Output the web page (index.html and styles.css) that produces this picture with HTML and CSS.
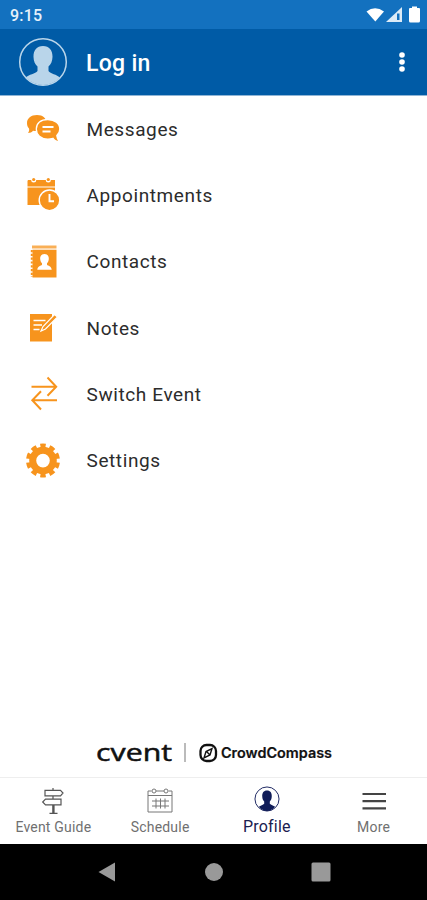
FILE: index.html
```html
<!DOCTYPE html>
<html lang="en">
<head>
<meta charset="utf-8">
<title>Profile</title>
<link rel="stylesheet" href="styles.css">
</head>
<body>
<div class="status">
  <span class="time">9:15</span>
  <svg width="56" height="20" viewBox="0 0 56 20" fill="#fff"><path d="M1.500 5.500Q10-1 19 5.500L10.300 15.500z" transform="translate(0 2)"/><path d="M37 3V18H21z" fill="#dcebf7"/><path d="M32 9.500h2.500V16H32z" fill="#1371bf"/><path d="M45 4h2V2.500h5V4h2q1 0 1 1v12q0 1.500-1.500 1.500h-8Q44 18.500 44 17V5q0-1 1-1z"/></svg>
</div>
<header class="header">
  <svg class="avatar" width="50" height="50" viewBox="0 0 50 50"><clipPath id="c"><circle cx="25" cy="25" r="23"/></clipPath><circle cx="25" cy="25" r="23.300" fill="none" stroke="#b9d5ea" stroke-width="1.500"/><path clip-path="url(#c)" fill="#b9d5ea" d="M25 9c6.500 0 9.700 4.800 9.500 11-.1 4.500-1.700 7.500-4 9.500v4.500c2 3 8 3 12 7v9H7v-9c4-4 10.500-4 12.500-7v-4.500c-2.300-2-3.900-5-4-9.500C15.300 13.800 18.500 9 25 9z"/></svg>
  <h1>Log in</h1>
  <svg width="10" height="24" viewBox="0 0 10 24" fill="#fff"><circle cx="5" cy="5" r="2.800"/><circle cx="5" cy="12" r="2.800"/><circle cx="5" cy="19" r="2.800"/></svg>
</header>
<main>
  <a class="row"><svg class="ic" viewBox="0 0 40 40"><path d="M14 6c6 0 9.500 3.500 9.500 8S19 22 13 22c-1 0-2 0-3-.3C9 23 7 24 5 24c1-1.500 1.500-3 1-4.500C4.500 18 4 16 4 14c0-4.500 4-8 10-8z"/><path stroke="#fff" stroke-width="1.300" d="M24.800 10.500c7 0 12 4 12 9.500 0 2.800-1.200 5-3 6.500 0 2 .8 3.800 2.700 6-3 0-5-.8-6.500-3.200-1.500.5-3 .8-5.200.8-7 0-11.500-4.300-11.500-10.100s4.500-9.500 11.500-9.500z"/><path d="M19.500 18h11M19.500 22.500h8" fill="none" stroke="#fff" stroke-width="1.800"/></svg><span>Messages</span></a>
  <a class="row"><svg class="ic" viewBox="0 0 40 40"><path d="M5 5h3.200a2.500 2.500 0 0 0 5 0h9.600a2.500 2.500 0 0 0 5 0H32v6.500H4.500V6z"/><circle cx="10.700" cy="4.500" r="1.600"/><circle cx="25.300" cy="4.500" r="1.600"/><path d="M4.500 12.500H32V30H4.500z"/><circle cx="26.500" cy="25.300" r="10.300" stroke="#fff" stroke-width="1.400"/><path d="M26.500 19v7.200h4.500" fill="none" stroke="#fff" stroke-width="1.900"/></svg><span>Appointments</span></a>
  <a class="row"><svg class="ic" viewBox="0 0 40 40"><path d="M9 3.500h24.500v3H9z" opacity=".75"/><path d="M9.500 7.700h24v27.800h-24z"/><path d="M8.800 8v27" fill="none" stroke="#f7941d" stroke-width="2" stroke-dasharray="2.200 1.600"/><path fill="#fff" d="M21.500 12c3 0 4.500 2.200 4.300 5-.1 2-.8 3.300-1.800 4.300v1.500c1 1.200 4.300 1 4.700 5H14.300c.4-4 3.700-3.800 4.700-5v-1.500c-1-1-1.700-2.300-1.800-4.300-.2-2.800 1.300-5 4.300-5z"/></svg><span>Contacts</span></a>
  <a class="row"><svg class="ic" viewBox="0 0 40 40"><path d="M7 6h22v27.500H7z"/><path d="M10.500 12.500h12M10.500 17h8.500M10.500 21.500h6" fill="none" stroke="#fff" stroke-width="1.500"/><path d="M18 23l2-4.500L31.500 6.500l3 2.500L22.500 21z" stroke="#fff" stroke-width="1.200"/></svg><span>Notes</span></a>
  <a class="row"><svg class="ic line" viewBox="0 0 40 40"><path d="M8.500 12.700H33M24.500 3.500l8.700 9.200-8.700 9M34 26.300H9.500M18 17.300l-8.700 9 8.700 9.200"/></svg><span>Switch Event</span></a>
  <a class="row"><svg class="ic" viewBox="0 0 40 40"><circle cx="20" cy="19.600" r="10.300" fill="none" stroke="#f7941d" stroke-width="7"/><circle cx="20" cy="19.600" r="14.600" fill="none" stroke="#f7941d" stroke-width="4.800" pathLength="100" stroke-dasharray="5.800 4.200" stroke-dashoffset="-22.100"/></svg><span>Settings</span></a>
</main>
<footer class="brand">
  <svg width="240" height="30" viewBox="0 0 240 30"><text class="cvent" x="2" y="21" textLength="76" lengthAdjust="spacingAndGlyphs">cvent</text><path d="M91 3v19" stroke="#bbb" stroke-width="2"/><rect x="106.500" y="5" width="15.500" height="16" rx="6" fill="none" stroke="#111" stroke-width="2.300"/><path d="M118 8.500l-2 6.500-6 3 2-6.500zM112.500 11.500l3 3" fill="none" stroke="#111" stroke-width="1.400"/><text class="crowd" x="127" y="18" textLength="111" lengthAdjust="spacingAndGlyphs">CrowdCompass</text></svg>
</footer>
<nav class="tabs">
  <a><svg width="28" height="28" viewBox="0 0 28 28" fill="none" stroke="#555" stroke-width="1.200"><path d="M14 1v2M14 9v3M13.800 18v8M15 18v8M10.500 26.300h8M6 3.300h15.500l2.500 2.700-2.500 2.800H6zM22 12.200H6.500L3.700 15l2.800 2.800H22z"/></svg><span>Event Guide</span></a>
  <a><svg width="28" height="28" viewBox="0 0 28 28" fill="none" stroke="#777" stroke-width="1"><path d="M5.500 4H2v21h24V4h-3.500M10 4h8M2 8.500h24M6 14h17M6 19h17M10 11.500v10M14.500 11.500v10M19 11.500v10"/><circle cx="8" cy="4" r="2"/><circle cx="20" cy="4" r="2"/></svg><span>Schedule</span></a>
  <a class="active"><svg width="28" height="28" viewBox="0 0 50 50"><circle cx="25" cy="25" r="21.500" fill="none" stroke="#15205c" stroke-width="1.700"/><path fill="#101c58" d="M25 10c6 0 8.700 4.300 8.500 10-.1 4.500-1.500 7.500-3.500 9.500v4c2 2.500 6.500 3 9.500 5.500-3.500 4.500-9 7.500-14.500 7.500S14 43.500 10.500 39c3-2.500 7.500-3 9.500-5.500v-4c-2-2-3.400-5-3.500-9.500-.2-5.700 2.500-10 8.500-10z"/></svg><span>Profile</span></a>
  <a><svg width="28" height="28" viewBox="0 0 28 28" stroke="#444" stroke-width="2.200"><path d="M2.500 7h23.500M2.500 14.200h23.500M2.500 21.300h23.500"/></svg><span>More</span></a>
</nav>
<div class="sys">
  <svg width="20" height="22" viewBox="0 0 20 22"><path d="M18 1.500v19L1.500 11z"/></svg>
  <svg width="20" height="22" viewBox="0 0 20 22"><circle cx="10" cy="11" r="9"/></svg>
  <svg width="20" height="22" viewBox="0 0 20 22"><rect x=".5" y="1.500" width="19" height="19" rx="1.500"/></svg>
</div>
</body>
</html>
```
FILE: styles.css
```css
* { box-sizing: border-box; }
body {
  margin: 0;
  height: 900px;
  display: flex;
  flex-direction: column;
  background: #fff;
  font-family: Roboto, sans-serif;
  overflow: hidden;
}
svg { display: block; flex: none; overflow: visible; }
.status {
  height: 29px;
  padding: 0 6px 0 10px;
  display: flex;
  align-items: center;
  justify-content: space-between;
  background: #1371bf;
  color: #e6f1fa;
}
.status svg { margin-top: -2px; }
.time { font-size: 16px; font-weight: 500; letter-spacing: .2px; padding-top: 2px; }
.header {
  height: 66px;
  padding: 0 20px 0 18px;
  display: flex;
  align-items: center;
  background: #005ba6;
  color: #fff;
}
.header h1 { flex: 1; margin: 0 0 0 18px; padding-top: 3px; font-size: 23px; font-weight: 500; letter-spacing: .3px; }
main { flex: 1; border-top: 1px solid #8fb5d6; }
.row { height: 66.3px; display: flex; align-items: center; padding-left: 23px; }
.ic { width: 40px; height: 40px; fill: #f7941d; }
.ic.line { fill: none; stroke: #f7941d; stroke-width: 2; }
.row span { margin-left: 23.500px; font-size: 19px; letter-spacing: .6px; color: #2c2c2c; }
.brand { height: 37px; display: flex; justify-content: center; }
.cvent { font: 500 23px "Open Sans", sans-serif; fill: #111; stroke: #111; stroke-width: .5; }
.crowd { font: 600 14px Inter, sans-serif; fill: #111; stroke: #111; stroke-width: .2; }
.tabs { height: 67px; display: grid; grid-template-columns: repeat(4, 1fr); border-top: 1px solid #eee; color: #707070; }
.tabs a { display: flex; flex-direction: column; align-items: center; padding-top: 9px; font-size: 14px; letter-spacing: .2px; }
.tabs span { line-height: 18px; margin-top: 3px; white-space: nowrap; }
.tabs .active { color: #1a2050; font-size: 16px; padding-top: 7px; }
.tabs .active span { margin-top: 5px; }
.sys { height: 56px; display: grid; grid-template-columns: repeat(3, 107px); justify-content: center; justify-items: center; align-items: center; background: #000; fill: #999; }
```
